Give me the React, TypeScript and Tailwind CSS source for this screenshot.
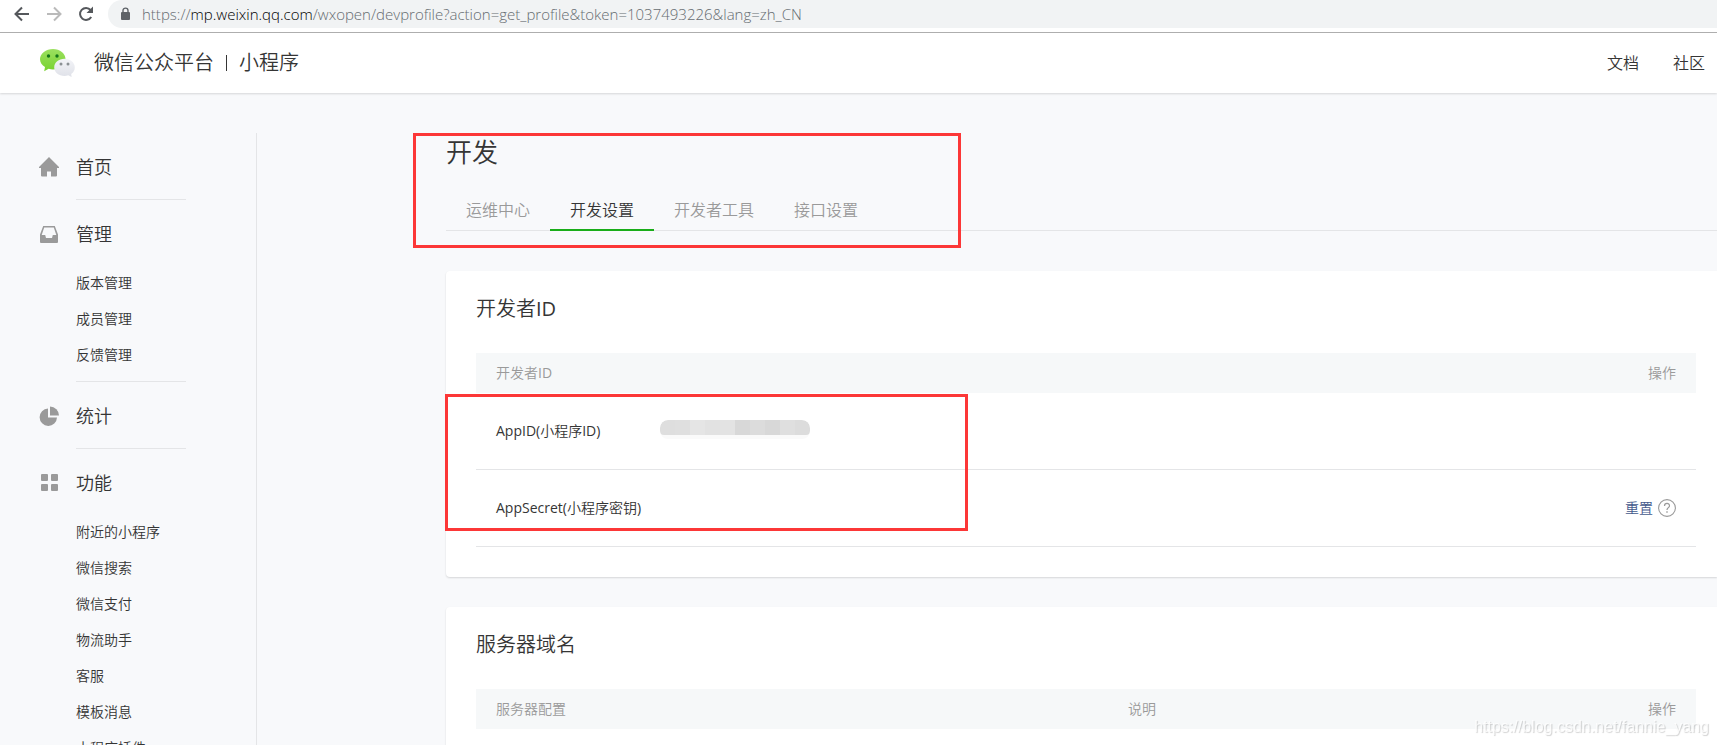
import type { ReactNode } from 'react';

const navGroups: { title: string; icon: ReactNode; items: string[] }[] = [
  {
    title: '首页',
    icon: <path d="M10 0 L20 10 V11 H18 V18.5 Q18 19.5 17 19.5 H12 V14.5 H8 V19.5 H3 Q2 19.5 2 18.5 V11 H0 V10 Z" />,
    items: [],
  },
  {
    title: '管理',
    icon: (
      <path
        fillRule="evenodd"
        d="M4.2 2 H15.8 L19 10.5 V18 Q19 19 18 19 H2 Q1 19 1 18 V10.5 Z M5.2 3.5 L2.7 11 H6.2 L7 14 H13 L13.8 11 H17.3 L14.8 3.5 Z"
      />
    ),
    items: ['版本管理', '成员管理', '反馈管理'],
  },
  {
    title: '统计',
    icon: (
      <>
        <path d="M9 2.5 V11.5 H18 A8.7 8.7 0 1 1 9 2.5 Z" />
        <path d="M11 0.5 A9 9 0 0 1 20 9.5 H11 Z" />
      </>
    ),
    items: [],
  },
  {
    title: '功能',
    icon: (
      <>
        <rect x="2" y="1" width="7" height="7" rx="1" />
        <rect x="12" y="1" width="7" height="7" rx="1" />
        <rect x="2" y="11" width="7" height="7" rx="1" />
        <rect x="12" y="11" width="7" height="7" rx="1" />
      </>
    ),
    items: ['附近的小程序', '微信搜索', '微信支付', '物流助手', '客服', '模板消息', '小程序插件'],
  },
];

const tabs = ['运维中心', '开发设置', '开发者工具', '接口设置'];
const activeTab = '开发设置';

const mosaic = [
  'bg-[#dedede]',
  'bg-[#dfdfdf]',
  'bg-[#e5e5e5]',
  'bg-[#e2e2e2]',
  'bg-[#e3e3e3]',
  'bg-[#d8d8d8]',
  'bg-[#dcdcdc]',
  'bg-[#d8d8d8]',
  'bg-[#dfdfdf]',
  'bg-[#dcdcdc]',
];

function BrowserBar() {
  return (
    <div className="flex h-[33px] shrink-0 items-start border-b border-[#b0b0b0] bg-white">
      <div className="flex h-7 w-[108px] shrink-0 items-center gap-3 pl-3">
        <button aria-label="后退" className="text-[#55585c]">
          <svg width="20" height="20" viewBox="0 0 20 20" fill="none" stroke="currentColor" strokeWidth="2">
            <path d="M17 10 H4 M10 3.5 L3.5 10 L10 16.5" />
          </svg>
        </button>
        <button aria-label="前进" className="text-[#bababa]">
          <svg width="20" height="20" viewBox="0 0 20 20" fill="none" stroke="currentColor" strokeWidth="2">
            <path d="M3 10 H16 M10 3.5 L16.5 10 L10 16.5" />
          </svg>
        </button>
        <button aria-label="重新加载" className="text-[#55585c]">
          <svg width="20" height="20" viewBox="0 0 20 20">
            <path d="M15.2 13 A6 6 0 1 1 14.6 6" fill="none" stroke="currentColor" strokeWidth="2" />
            <path d="M17 2.5 V9 H10.5 Z" fill="currentColor" />
          </svg>
        </button>
      </div>
      <div className="flex h-7 flex-1 items-center gap-[11px] rounded-l-full bg-[#f1f3f4] pl-3">
        <svg width="11" height="14" viewBox="0 0 11 14" aria-hidden="true">
          <rect x="1" y="5" width="9" height="8" rx="1" fill="#5f6368" />
          <path d="M3 5.5 V3.6 A2.5 2.5 0 0 1 8 3.6 V5.5" fill="none" stroke="#5f6368" strokeWidth="1.4" />
        </svg>
        <div
          role="textbox"
          aria-label="地址"
          className="whitespace-nowrap font-['Open_Sans','Noto_Sans',sans-serif] text-[15px] leading-[26px] font-light text-[#666c71]"
        >
          https://<span className="text-black">mp.weixin.qq.com</span>
          /wxopen/devprofile?action=get_profile&amp;token=1037493226&amp;lang=zh_CN
        </div>
      </div>
    </div>
  );
}

function WeChatLogo() {
  return (
    <svg width="36" height="30" viewBox="0 0 36 30" aria-hidden="true">
      <defs>
        <linearGradient id="green" x1="0" y1="0" x2="0" y2="1">
          <stop offset="0" stopColor="#9be060" />
          <stop offset="1" stopColor="#78d22f" />
        </linearGradient>
        <linearGradient id="pale" x1="0" y1="0" x2="0" y2="1">
          <stop offset="0" stopColor="#f3f4f8" />
          <stop offset="1" stopColor="#dfe1e8" />
        </linearGradient>
      </defs>
      <path
        d="M13 1 C20 1 25.5 5.6 25.5 11.2 C25.5 17 20 21.4 13 21.4 C11.4 21.4 10 21.2 8.6 20.8 L4.2 23.2 L5 19 C2 17.2 0 14.5 0 11.2 C0 5.6 6 1 13 1 Z"
        fill="url(#green)"
      />
      <circle cx="8.5" cy="8" r="1.7" fill="#15761a" />
      <circle cx="17" cy="8" r="1.7" fill="#15761a" />
      <path
        d="M24.5 10.8 C30.3 10.8 34.8 14.5 34.8 19.4 C34.8 22 33.4 24.3 31.2 25.9 L31.6 29 L28.2 27.3 C27 27.7 25.8 27.9 24.5 27.9 C18.7 27.9 14.2 24.2 14.2 19.4 C14.2 14.5 18.7 10.8 24.5 10.8 Z"
        fill="url(#pale)"
      />
      <circle cx="21" cy="16" r="1.5" fill="#8b9094" />
      <circle cx="28" cy="16" r="1.5" fill="#8b9094" />
    </svg>
  );
}

function SiteHeader() {
  return (
    <header className="relative flex h-[60px] shrink-0 items-center justify-between bg-white pr-3 pl-10 shadow-[0_1px_2px_rgba(0,0,0,0.14)]">
      <div className="flex items-center gap-[18px]">
        <WeChatLogo />
        <h1 className="flex items-center gap-3 text-xl leading-7 font-light">
          <span>微信公众平台</span>
          <span className="h-4 w-px bg-[#353535]" />
          <span>小程序</span>
        </h1>
      </div>
      <nav className="flex gap-[34px] text-base">
        <a href="#docs">文档</a>
        <a href="#community">社区</a>
      </nav>
    </header>
  );
}

function Sidebar() {
  return (
    <aside className="w-[257px] shrink-0 border-r border-[#e4e5e7] pl-[38px]">
      {navGroups.map((group) => (
        <div key={group.title}>
          <a href="#group" className="flex h-[65px] items-center gap-[17px] pt-0.5 pl-px text-lg">
            <svg width="20" height="20" viewBox="0 0 20 20" fill="#9a9a9a" aria-hidden="true">
              {group.icon}
            </svg>
            {group.title}
          </a>
          <div
            className={
              group.items.length
                ? 'ml-[38px] w-[110px] border-b border-[#e4e5e7] pb-2'
                : 'ml-[38px] w-[110px] border-b border-[#e4e5e7] pb-px'
            }
          >
            {group.items.map((item) => (
              <a key={item} href="#item" className="block text-sm leading-9">
                {item}
              </a>
            ))}
          </div>
        </div>
      ))}
    </aside>
  );
}

function Card({ title, children }: { title: string; children: ReactNode }) {
  return (
    <section className="relative rounded-l bg-white pt-6 pr-[21px] pb-[30px] pl-[30px] shadow-[0_1px_2px_rgba(0,0,0,0.14)]">
      <h3 className="mb-[30px] text-xl leading-7">{title}</h3>
      {children}
    </section>
  );
}

export default function App() {
  return (
    <div className="flex h-screen flex-col overflow-hidden bg-[#f8f9fb] font-['Open_Sans','Noto_Sans_CJK_SC_DemiLight','Noto_Sans_CJK_SC',sans-serif] font-normal text-[#353535]">
      <BrowserBar />
      <SiteHeader />
      <div className="flex flex-1 pt-10">
        <Sidebar />
        <main className="ml-[189px] min-w-0 flex-1">
          <div className="relative">
            <h2 className="text-[26px] leading-[38px]">开发</h2>
            <nav className="mt-5 flex shadow-[inset_0_-1px_0_#e4e5e7]">
              {tabs.map((tab) => (
                <a
                  key={tab}
                  href="#tab"
                  className={
                    tab === activeTab
                      ? 'h-10 border-b-2 border-[#1aad19] px-5 text-base leading-[38px]'
                      : 'h-10 px-5 text-base leading-[38px] text-[#9a9a9a]'
                  }
                >
                  {tab}
                </a>
              ))}
            </nav>
            <div className="pointer-events-none absolute top-0 -left-[33px] h-[115px] w-[548px] border-3 border-[#fc3737]" />
          </div>

          <div className="mt-10 flex flex-col gap-[30px]">
            <Card title="开发者ID">
              <table className="w-full table-fixed border-separate border-spacing-0 text-left text-sm">
                <thead>
                  <tr className="h-10 bg-[#f6f8f9] text-[#9a9a9a]">
                    <th className="w-[184px] pl-5 font-normal">开发者ID</th>
                    <th />
                    <th className="w-[100px] pr-5 text-right font-normal">操作</th>
                  </tr>
                </thead>
                <tbody>
                  <tr className="h-[77px]">
                    <td className="border-b border-[#e4e5e7] pl-5 whitespace-nowrap">AppID(小程序ID)</td>
                    <td className="border-b border-[#e4e5e7] pb-1">
                      <div className="flex h-[19px] w-[150px] flex-col overflow-hidden rounded-lg bg-[#fafafa]">
                        <div className="flex h-[15px] overflow-hidden rounded-t-lg rounded-b-sm">
                          {mosaic.map((tone, i) => (
                            <span key={i} className={`flex-1 ${tone}`} />
                          ))}
                        </div>
                      </div>
                    </td>
                    <td className="border-b border-[#e4e5e7]" />
                  </tr>
                  <tr className="h-[77px]">
                    <td className="border-b border-[#e4e5e7] pl-5 whitespace-nowrap">AppSecret(小程序密钥)</td>
                    <td className="border-b border-[#e4e5e7]" />
                    <td className="border-b border-[#e4e5e7] pr-5">
                      <div className="flex items-center justify-end gap-[5px]">
                        <a href="#reset" className="text-[#44598c]">
                          重置
                        </a>
                        <button aria-label="帮助">
                          <svg width="18" height="18" viewBox="0 0 18 18" fill="none" stroke="#9a9a9a" className="block">
                            <circle cx="9" cy="9" r="8.4" strokeWidth="1.1" />
                            <path d="M6.5 7 C6.5 3.6 11.5 3.6 11.5 6.8 C11.5 8.6 9 8.8 9 11" strokeWidth="1.2" />
                            <path d="M9 12.3 V13.7" strokeWidth="1.4" />
                          </svg>
                        </button>
                      </div>
                    </td>
                  </tr>
                </tbody>
              </table>
              <div className="pointer-events-none absolute top-[123px] -left-px h-[137px] w-[523px] border-3 border-[#fc3737]" />
            </Card>

            <Card title="服务器域名">
              <table className="w-full table-fixed border-separate border-spacing-0 text-left text-sm">
                <thead>
                  <tr className="h-10 bg-[#f6f8f9] text-[#9a9a9a]">
                    <th className="pl-5 font-normal">服务器配置</th>
                    <th className="w-[468px] font-normal">说明</th>
                    <th className="w-[100px] pr-5 text-right font-normal">操作</th>
                  </tr>
                </thead>
              </table>
            </Card>
          </div>
        </main>
      </div>
      <div className="pointer-events-none fixed right-2 bottom-1.5 font-['Liberation_Sans',sans-serif] text-base font-normal text-white/80 [text-shadow:1px_1px_1px_rgba(0,0,0,0.18)]">
        https://blog.csdn.net/fannie_yang
      </div>
    </div>
  );
}
